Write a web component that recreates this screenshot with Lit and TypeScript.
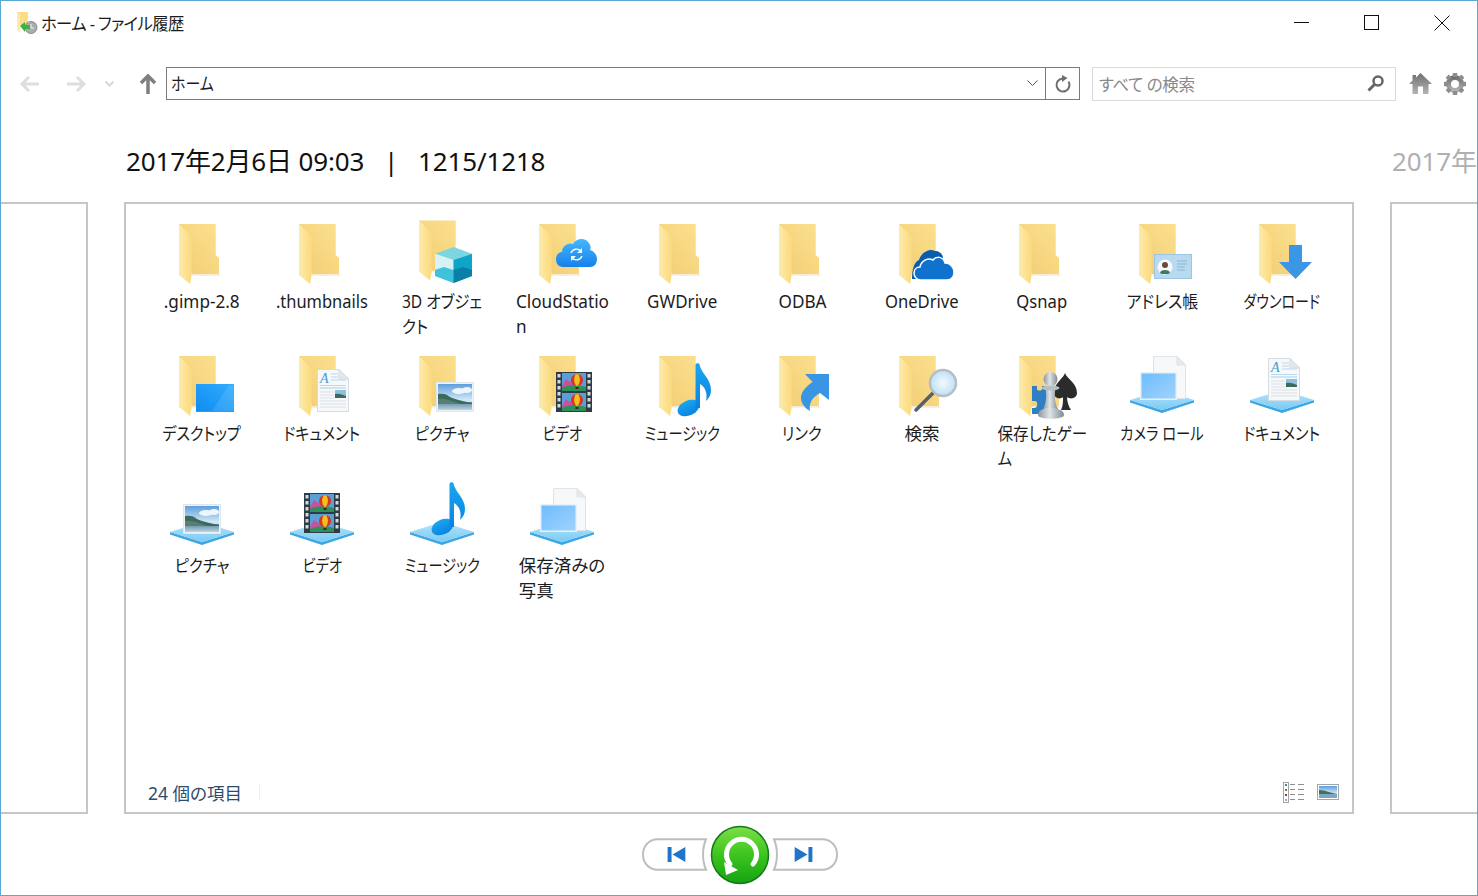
import { LitElement, html, css, svg } from 'lit'
import { customElement } from 'lit/decorators.js'

// shared overlay pieces, all drawn in a 64x64 icon box
const folder = (dy = 0) => svg`<g transform="translate(8 ${4 + dy})">
  <path d="M12 50.3H40L43 52H14Z" fill="#000" opacity=".06"/>
  <path d="M0 0H36.7V31L40 34V50.3H12.7Z" fill="url(#fBack)"/>
  <path d="M0 0L12.7 12.5V51L11 60L0 51Z" fill="url(#fFlap)"/>
</g>`

const base = svg`<path d="M-1 48L31 58L63 48V50.5L31 61L-1 50.5Z" fill="#3fa6e6"/>
  <path d="M-1 48L31 38L63 48L31 58Z" fill="url(#libTop)"/>`

const picture = (x: number, y: number) => svg`<g transform="translate(${x} ${y})">
  <rect x=".5" y=".5" width="37" height="29" fill="#eef3f7" stroke="#dfe6ec"/>
  <rect x="2" y="2" width="34" height="26" fill="url(#sky)"/>
  <ellipse cx="23" cy="9" rx="7" ry="3" fill="#eef6fb"/>
  <ellipse cx="31" cy="8" rx="5" ry="3" fill="#eef6fb"/>
  <rect x="2" y="20" width="34" height="8" fill="url(#water)"/>
  <path d="M2 12C7 11 11 12 14 15C18 17 26 19 36 21V22H2Z" fill="#3c6b5e"/>
  <path d="M2 17C8 16 16 19 24 22H2Z" fill="#587f74"/>
</g>`

const doc = (x: number, y: number) => svg`<g transform="translate(${x} ${y})">
  <path d="M.5 .5H22L31.5 10V42.5H.5Z" fill="#f6f8fa" stroke="#d6dce1"/>
  <path d="M22 .5V10H31.5Z" fill="#e3e8ec" stroke="#d6dce1"/>
  <text x="3" y="14" font-family="Liberation Serif, serif" font-style="italic" font-size="14" fill="#3f9ad6">A</text>
  <path d="M14 5H21M14 8H21M14 11H29M3 16.5H29" stroke="#b9d9ee" stroke-width="1"/>
  <path d="M3 19H29" stroke="#a8cfe8" stroke-width="1"/>
  <path d="M3 23H17M3 26H17M3 29H17M3 32H29M3 35H29M3 38H29" stroke="#dbe1e6" stroke-width="1"/>
  <rect x="18" y="21" width="11" height="8" fill="#8fc0e0"/>
  <path d="M18 25C22 24 26 26 29 27V29H18Z" fill="#3c6b5e"/>
</g>`

const photos = svg`<path d="M22.5 4.5H46L54.5 13V46.5H22.5Z" fill="#f6f8fa" stroke="#dfe4e8"/>
  <path d="M46 4.5V13H54.5Z" fill="#e6eaee" stroke="#dfe4e8"/>
  <rect x="9" y="20" width="37" height="28" fill="#e9f1f7"/>
  <rect x="10.500" y="21.500" width="34" height="25" fill="url(#photo)"/>`

const film = (x: number, y: number) => {
  const holes = [2, 8, 14, 20, 26, 32]
  const frame = (fy: number) => svg`<rect x="6" y=${fy} width="24" height="18" fill="#5b9fd6"/>
    <path d="M6 ${fy + 13}L10 ${fy + 6}L14 ${fy + 9}L18 ${fy + 7}V${fy + 18}H6Z" fill="#c9509c"/>
    <path d="M6 ${fy + 15}C12 ${fy + 11} 22 ${fy + 12} 30 ${fy + 14}V${fy + 18}H6Z" fill="#2f8f5a"/>
    <circle cx="21" cy=${fy + 7} r="6" fill="#d8341e"/>
    <path d="M19.500 ${fy + 1.200}C17.500 ${fy + 5} 17.500 ${fy + 9} 20 ${fy + 12.700}H22C24.500 ${fy + 9} 24.500 ${fy + 5} 22.500 ${fy + 1.200}Z" fill="#f0c020"/>
    <rect x="19.500" y=${fy + 14} width="3" height="2" fill="#3a2a20"/>`
  return svg`<g transform="translate(${x} ${y})">
    <rect width="36" height="40" fill="#2e3a44"/>
    ${holes.map(h => svg`<rect x="1.500" y=${h} width="3" height="3.500" fill="#d6dadd"/>
      <rect x="31.500" y=${h} width="3" height="3.500" fill="#d6dadd"/>`)}
    ${frame(1)}${frame(21)}
  </g>`
}

const note = (dx: number, dy: number) => svg`<g transform="translate(${dx} ${dy})" fill="url(#noteFill)">
  <ellipse cx="37.500" cy="56" rx="11.500" ry="7.500" transform="rotate(-24 37.500 56)"/>
  <path d="M44.500 13C44.500 11 48 10.500 48.500 12.500C50 21 60 27 60 38C60 43 58 46 55 49C57 41 54 35 49 32V56H44.500Z"/>
</g>`

// sx squeezes a label to the narrower width of the original UI font
type Item = { label: string; icon: unknown; sx?: number }

const items: Item[] = [
  { label: '.gimp-2.8', sx: 0.98, icon: folder() },
  { label: '.thumbnails', sx: 0.94, icon: folder() },
  { label: '3D オブジェ\nクト', sx: 0.89, icon: svg`${folder(-3.500)}
    <path d="M42.500 27L61 33.700L42.500 40L24 33.700Z" fill="#7bd6e2"/>
    <path d="M24 33.700L42.500 40V63L24 56Z" fill="#d8f1f4"/>
    <path d="M24 50L33 47L42.500 50V63L24 56Z" fill="#3fc3da"/>
    <path d="M61 33.700L42.500 40V63L61 56Z" fill="#0ea6c8"/>
    <path d="M42.500 50L52 47L61 50V56L42.500 63Z" fill="#0b7fa6"/>` },
  { label: 'CloudStatio\nn', sx: 0.98, icon: svg`${folder()}
    <path d="M32 47C27 47 25 43 25 39C25 35 28 32 31 32C31 26 37 22 42 24C45 19 53 17 57 22C60 25 60 28 59 30C63 31 66 35 66 39C66 44 63 47 59 47Z" fill="url(#cloud)"/>
    <path d="M40 33A6 6 0 0 1 50 31M51 36A6 6 0 0 1 41 38" fill="none" stroke="#fff" stroke-width="1.400"/>
    <path d="M51 28V33H46ZM40 41V36H45Z" fill="#fff"/>` },
  { label: 'GWDrive', sx: 0.97, icon: folder() },
  { label: 'ODBA', sx: 0.98, icon: folder() },
  { label: 'OneDrive', sx: 0.95, icon: svg`${folder()}
    <path d="M21 59C21 50 23 42 28 40C30 33 38 28 44 31C48 31 52 34 52 38V59Z" fill="#0a5cb0"/>
    <path d="M30 60C25 60 23 56 23 53C23 49 26 47 29 47C30 41 37 37 42 40C45 36 52 36 54 43C59 43 63 47 63 52C63 57 60 60 56 60Z" fill="#0f72cf" stroke="#fff" stroke-width="1.500"/>` },
  { label: 'Qsnap', sx: 0.95, icon: folder() },
  { label: 'アドレス帳', sx: 0.91, icon: svg`${folder()}
    <rect x="23.500" y="34.500" width="37" height="24" fill="#b7daf0" stroke="#9cc6e3"/>
    <circle cx="34" cy="47" r="7.500" fill="#f6f9fb"/>
    <circle cx="34" cy="45" r="3" fill="#6b4a35"/>
    <path d="M29 53C29 49 39 49 39 53L37 54H31Z" fill="#3f7a5a"/>
    <path d="M46 41H56M46 44H56M46 47H54M46 50H54" stroke="#8cb7d4"/>` },
  { label: 'ダウンロード', sx: 0.8, icon: svg`${folder()}
    <path d="M38 25H51V42H61L44.500 59L28 42H38Z" fill="#3b96e6"/>` },
  { label: 'デスクトップ', sx: 0.86, icon: svg`${folder()}
    <rect x="25" y="32" width="38" height="28" fill="url(#desk)"/>
    <path d="M41 59L58 33H63V59Z" fill="#fff" opacity=".1"/>
    <rect x="25" y="59" width="38" height="1" fill="#5e8fb0"/>` },
  { label: 'ドキュメント', sx: 0.855, icon: svg`${folder()}${doc(26, 17)}` },
  { label: 'ピクチャ', sx: 0.88, icon: svg`${folder()}${picture(25, 30)}` },
  { label: 'ビデオ', sx: 0.81, icon: svg`${folder()}${film(25, 20)}` },
  { label: 'ミュージック', sx: 0.81, icon: svg`${folder()}${note(0, 0)}` },
  { label: 'リンク', sx: 0.87, icon: svg`${folder()}
    <path d="M58 22H34L41.500 30C34 35 29.500 41 30 47C30.500 52 35 57 39 59C38 52 40 46 49 41L58 48Z" fill="#3a96e4"/>` },
  { label: '検索', icon: svg`${folder()}
    <path d="M25 58L42 41" stroke="#55606a" stroke-width="3.500" stroke-linecap="round"/>
    <circle cx="52" cy="31" r="13" fill="url(#lens)" stroke="#b4bfc4" stroke-width="2.500"/>` },
  { label: '保存したゲー\nム', sx: 0.89, icon: svg`${folder()}
    <path d="M21 34H26V37C26 39 31 39 31 37V34H37V62H21V56H24C27 55 27 49 24 49H21Z" fill="#2f7fc4"/>
    <path d="M54 21C56 27 66 31 66 41C66 46 60 48 56 45C56 50 58 55 60 58H50C52 54 52 50 52 45C49 48 43 46 43 41C43 31 52 27 54 21Z" fill="#2b2b2b"/>
    <path d="M32 57C35 52 36 44 34.500 37H44.500C43 44 44 52 47 57Z" fill="url(#pawn)"/>
    <path d="M27 63C27 58 33 56 39.500 56C46 56 53 58 53 63C53 68 27 68 27 63Z" fill="url(#pawn)"/>
    <ellipse cx="39.500" cy="36" rx="9" ry="2.500" fill="#b5bfc4"/>
    <circle cx="39.500" cy="27" r="7" fill="url(#pawn)"/>` },
  { label: 'カメラ ロール', sx: 0.82, icon: svg`${base}${photos}` },
  { label: 'ドキュメント', sx: 0.855, icon: svg`${base}${doc(17, 6)}` },
  { label: 'ピクチャ', sx: 0.88, icon: svg`${base}${picture(12, 20)}` },
  { label: 'ビデオ', sx: 0.81, icon: svg`${base}${film(13, 9)}` },
  { label: 'ミュージック', sx: 0.81, icon: svg`${base}${note(-6, -13)}` },
  { label: '保存済みの\n写真', icon: svg`${base}${photos}` },
]

const defs = html`<svg class="defs" aria-hidden="true">
  <defs>
    <linearGradient id="fBack" x1="0" y1="1" x2="1" y2="0"><stop offset="0" stop-color="#f2cd74"/><stop offset="1" stop-color="#fce08e"/></linearGradient>
    <linearGradient id="fFlap" x1="0" y1="0" x2="1" y2="0"><stop offset="0" stop-color="#fdeaab"/><stop offset="1" stop-color="#fbda7c"/></linearGradient>
    <linearGradient id="libTop" x1="0" y1="0" x2="0" y2="1"><stop offset="0" stop-color="#b5e5fb"/><stop offset="1" stop-color="#79caf3"/></linearGradient>
    <linearGradient id="sky" x1="0" y1="0" x2="0" y2="1"><stop offset="0" stop-color="#5d9fdd"/><stop offset=".6" stop-color="#cfe6f5"/></linearGradient>
    <linearGradient id="water" x1="0" y1="0" x2="0" y2="1"><stop offset="0" stop-color="#5c8aa6"/><stop offset="1" stop-color="#bcd3e1"/></linearGradient>
    <linearGradient id="photo" x1="0" y1="0" x2="1" y2="1"><stop offset="0" stop-color="#6ebdff"/><stop offset="1" stop-color="#a0d3fb"/></linearGradient>
    <linearGradient id="noteFill" x1="0" y1="0" x2="0" y2="1"><stop offset="0" stop-color="#1ba6f0"/><stop offset="1" stop-color="#0a82e2"/></linearGradient>
    <linearGradient id="cloud" x1="0" y1="0" x2="0" y2="1"><stop offset="0" stop-color="#45b8ff"/><stop offset="1" stop-color="#1681ea"/></linearGradient>
    <linearGradient id="desk" x1="0" y1="1" x2="1" y2="0"><stop offset="0" stop-color="#0c8cf0"/><stop offset="1" stop-color="#34adff"/></linearGradient>
    <radialGradient id="lens"><stop offset="0" stop-color="#f2f9fe"/><stop offset="1" stop-color="#bfe0f6"/></radialGradient>
    <linearGradient id="pawn" x1="0" y1="0" x2="1" y2="0"><stop offset="0" stop-color="#8b969c"/><stop offset=".45" stop-color="#dfe5e8"/><stop offset="1" stop-color="#7f8a91"/></linearGradient>
    <linearGradient id="tool" x1="0" y1="0" x2="0" y2="1"><stop offset="0" stop-color="#6f6f6f"/><stop offset="1" stop-color="#b4b4b4"/></linearGradient>
    <linearGradient id="go" x1="0" y1="0" x2="0" y2="1"><stop offset="0" stop-color="#7ddf45"/><stop offset=".5" stop-color="#3cc41f"/><stop offset="1" stop-color="#15a312"/></linearGradient>
  </defs>
</svg>`

@customElement('app-root')
export class AppRoot extends LitElement {
  static styles = css`
    :host {
      display: block;
      height: 896px;
      font-family: "Noto Sans", "Noto Sans CJK JP", sans-serif;
      font-feature-settings: "palt";
      color: #1c1c1c;
    }
    svg { display: block; overflow: visible; flex: none; }
    .defs { width: 0; height: 0; }
    .window {
      box-sizing: border-box;
      height: 896px;
      border: 1px solid #5aa8d4;
      background: #fff;
      display: flex;
      flex-direction: column;
      overflow: hidden;
    }
    .title {
      height: 44px;
      display: flex;
      align-items: center;
      padding-left: 15px;
      gap: 3px;
      font-size: 17px;
      letter-spacing: -0.6px;
    }
    .title .name { flex: 1; padding-bottom: 2px; transform: scaleX(0.96); transform-origin: left; }
    .ctl { width: 70px; display: flex; justify-content: center; }
    .ctls { display: flex; }
    .nav {
      margin-top: 22px;
      height: 33px;
      display: flex;
      align-items: center;
      padding-left: 19px;
    }
    .nav .back { margin-right: 26px; }
    .nav .fwd { margin-right: 19px; }
    .nav .drop { margin-right: 26px; }
    .nav .up { margin-right: 10px; }
    .addr {
      box-sizing: border-box;
      width: 880px;
      height: 33px;
      border: 1px solid #7a7a7a;
      display: flex;
      align-items: center;
      padding: 0 7px 0 4px;
      font-size: 17px;
    }
    .addr span { flex: 1; padding-bottom: 2px; transform: scaleX(0.88); transform-origin: left; }
    .reload {
      box-sizing: border-box;
      width: 35px;
      height: 33px;
      margin-left: -1px;
      border: 1px solid #7a7a7a;
      display: flex;
      align-items: center;
      justify-content: center;
    }
    .search {
      box-sizing: border-box;
      width: 304px;
      height: 34px;
      margin-left: 12px;
      border: 1px solid #dadada;
      display: flex;
      align-items: center;
      padding: 0 11px 0 6px;
      font-size: 17px;
      color: #8a8a8a;
      letter-spacing: -0.4px;
    }
    .search span { flex: 1; transform: scaleX(0.97); transform-origin: left; }
    .home { margin-left: 13px; }
    .gear { margin-left: 11px; }
    .slides {
      flex: 1;
      min-height: 0;
      display: flex;
      justify-content: center;
      gap: 36px;
      padding-top: 44px;
      overflow: hidden;
    }
    .slide {
      flex: none;
      width: 1230px;
      display: flex;
      flex-direction: column;
    }
    .stamp {
      height: 36px;
      line-height: 34px;
      margin-bottom: 22px;
      padding-left: 2px;
      font-size: 26px;
      white-space: pre;
      letter-spacing: -0.15px;
      color: #111;
    }
    .slide.side .stamp { color: #b0b0b0; }
    .sheet {
      flex: 1;
      box-sizing: border-box;
      border: 2px solid #c6c6c6;
      display: flex;
      flex-direction: column;
    }
    .grid {
      flex: 1;
      display: grid;
      grid-template-columns: repeat(10, 120px);
      grid-auto-rows: 132px;
      padding: 16px 0 0 17px;
    }
    .cell { display: flex; flex-direction: column; align-items: center; }
    .ic { width: 64px; height: 64px; }
    .label {
      margin: 5px 0 0 -2px;
      font-size: 17.500px;
      line-height: 25px;
      white-space: pre;
      color: #1c1c1c;
    }
    .status {
      box-sizing: border-box;
      height: 36px;
      display: flex;
      align-items: center;
      padding: 0 13px 4px 22px;
      font-size: 17.500px;
      color: #2f4a6b;
    }
    .status .sep { width: 1px; height: 18px; margin-left: 17px; background: #eeeeee; }
    .status .views { margin-left: auto; display: flex; align-items: center; gap: 12px; }
    .transport {
      box-sizing: border-box;
      height: 81px;
      display: flex;
      align-items: center;
      justify-content: center;
      gap: 3px;
      padding-left: 2px;
    }
  `

  render() {
    return html`
      ${defs}
      <div class="window">
        <div class="title">
          <svg width="22" height="22" viewBox="0 0 22 22">
            <path d="M1 0H12V13H3L1 14Z" fill="#fbdd88"/>
            <path d="M1 0L4 3V17L3 21L1 17Z" fill="#fdeaab"/>
            <circle cx="15" cy="15.500" r="6" fill="#a9adb0" stroke="#8a8f92"/>
            <path d="M15 12V16H18" fill="none" stroke="#f4f4f4"/>
            <path d="M4 14L9 10V13H14V17H9V20Z" fill="#3fb13c"/>
          </svg>
          <span class="name">ホーム - ファイル履歴</span>
          <div class="ctls">
            <div class="ctl"><svg width="16" height="16"><path d="M0 7.500H15" stroke="#111"/></svg></div>
            <div class="ctl"><svg width="16" height="16"><rect x=".5" y=".5" width="14" height="14" fill="none" stroke="#111"/></svg></div>
            <div class="ctl"><svg width="16" height="16"><path d="M.5 .5L15.500 15.500M15.500 .5L.5 15.500" stroke="#111"/></svg></div>
          </div>
        </div>

        <div class="nav">
          <svg class="back" width="20" height="16" viewBox="0 0 20 16"><path d="M19 8H2M9 1L2 8L9 15" fill="none" stroke="#dedede" stroke-width="3"/></svg>
          <svg class="fwd" width="20" height="16" viewBox="0 0 20 16"><path d="M1 8H18M11 1L18 8L11 15" fill="none" stroke="#dedede" stroke-width="3"/></svg>
          <svg class="drop" width="9" height="6" viewBox="0 0 9 6"><path d="M.5 .5L4.500 4.500L8.500 .5" fill="none" stroke="#d8d8d8" stroke-width="2"/></svg>
          <svg class="up" width="16" height="20" viewBox="0 0 16 20"><path d="M8 20V3M1 9L8 2L15 9" fill="none" stroke="#7f7f7f" stroke-width="3.500"/></svg>
          <div class="addr">
            <span>ホーム</span>
            <svg width="11" height="7" viewBox="0 0 11 7"><path d="M.5 .5L5.500 5.500L10.500 .5" fill="none" stroke="#555"/></svg>
          </div>
          <div class="reload">
            <svg width="16" height="17" viewBox="0 0 16 17"><path d="M13.500 6.500A6.500 6.500 0 1 1 7.500 3.500" fill="none" stroke="#6e6e6e" stroke-width="2"/><path d="M7 0L12.500 3L7 7Z" fill="#6e6e6e"/></svg>
          </div>
          <div class="search">
            <span>すべて の検索</span>
            <svg width="17" height="17" viewBox="0 0 17 17"><circle cx="11" cy="6" r="4.500" fill="none" stroke="#666" stroke-width="2.500"/><path d="M7.500 9.500L1.500 15.500" stroke="#666" stroke-width="3"/></svg>
          </div>
          <svg class="home" width="23" height="21" viewBox="0 0 23 21"><path d="M11.500 0L23 11H19.500V21H14V13.500H9V21H3.500V11H0L3.500 7.500V2H7V4.500Z" fill="url(#tool)"/></svg>
          <svg class="gear" width="24" height="24" viewBox="0 0 24 24">
            <circle cx="12" cy="12" r="6.500" fill="none" stroke="url(#tool)" stroke-width="5"/>
            <path d="M12 1V23M1 12H23M4.200 4.200L19.800 19.800M19.800 4.200L4.200 19.800" stroke="#8d8d8d" stroke-width="4.500" stroke-dasharray="4 14" fill="none"/>
          </svg>
        </div>

        <div class="slides">
          <div class="slide side"><div class="stamp"></div><div class="sheet"></div></div>
          <div class="slide">
            <div class="stamp">2017年2月6日 09:03   |   1215/1218</div>
            <div class="sheet">
              <div class="grid">
                ${items.map(it => html`
                  <div class="cell">
                    <svg class="ic" viewBox="0 0 64 64">${it.icon}</svg>
                    <div class="label" style="transform: scaleX(${it.sx ?? 1})">${it.label}</div>
                  </div>`)}
              </div>
              <div class="status">
                <span>24 個の項目</span>
                <div class="sep"></div>
                <div class="views">
                  <svg width="22" height="21" viewBox="0 0 22 21">
                    <rect x=".5" y=".5" width="5" height="20" fill="#fff" stroke="#a5a5a5"/>
                    <rect x="2" y="2" width="2" height="2" fill="#4e7f9c"/><rect x="2" y="7" width="2" height="2" fill="#7d7350"/>
                    <rect x="2" y="12" width="2" height="2" fill="#8a3a35"/><rect x="2" y="17" width="2" height="2" fill="#a8b0a0"/>
                    <path d="M7 2.500H12M15 2.500H21M7 7.500H12M15 7.500H21M7 12.500H12M15 12.500H21M7 17.500H12M15 17.500H21" stroke="#8f8f8f"/>
                  </svg>
                  <svg width="22" height="16" viewBox="0 0 22 16">
                    <rect x=".5" y=".5" width="21" height="15" fill="#fff" stroke="#a5a5a5"/>
                    <rect x="2" y="2" width="18" height="12" fill="url(#sky)"/>
                    <path d="M2 6C8 6 14 9 20 10V14H2Z" fill="#41705f"/>
                    <rect x="2" y="10" width="18" height="4" fill="#7fa6bd"/>
                  </svg>
                </div>
              </div>
            </div>
          </div>
          <div class="slide side"><div class="stamp">2017年2月6日 09:03</div><div class="sheet"></div></div>
        </div>

        <div class="transport">
          <svg width="65" height="33" viewBox="0 0 66 33">
            <path d="M16 1H65C61 10 61 23 65 32H16C7 32 1 25 1 16.500C1 8 7 1 16 1Z" fill="#fff" stroke="#bdbdbd" stroke-width="2"/>
            <path d="M26 9H30V24H26ZM44 9V24L31 16.500Z" fill="#1f75c9"/>
          </svg>
          <svg width="60" height="60" viewBox="0 0 60 60">
            <circle cx="30" cy="30" r="28.500" fill="url(#go)" stroke="#14791a" stroke-width="1.500"/>
            <path d="M43 39A15 15 0 1 0 20 39" fill="none" stroke="#fff" stroke-width="5" stroke-linecap="round"/>
            <path d="M14 37L28 45L16 50Z" fill="#fff"/>
          </svg>
          <svg width="65" height="33" viewBox="0 0 66 33">
            <path d="M50 1H1C5 10 5 23 1 32H50C59 32 65 25 65 16.500C65 8 59 1 50 1Z" fill="#fff" stroke="#bdbdbd" stroke-width="2"/>
            <path d="M22 9L35 16.500L22 24ZM36 9H40V24H36Z" fill="#1f75c9"/>
          </svg>
        </div>
      </div>
    `
  }
}
